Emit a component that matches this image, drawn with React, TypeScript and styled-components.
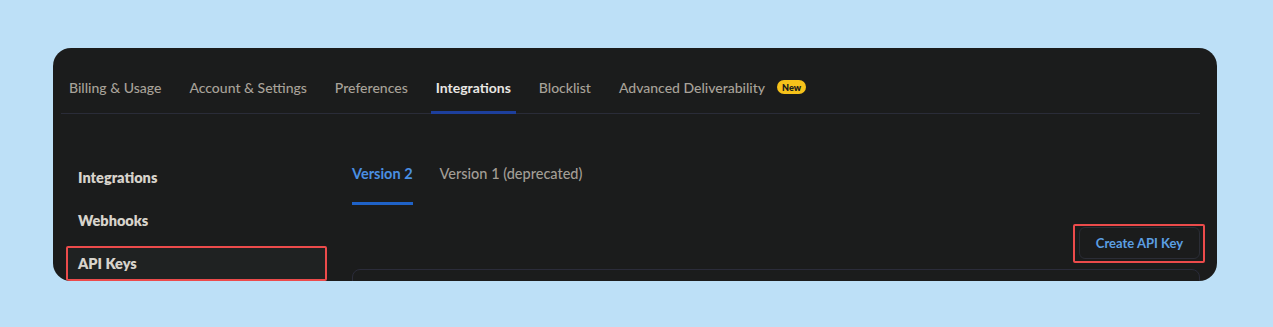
import React from 'react';
import styled, { createGlobalStyle } from 'styled-components';

const GlobalStyle = createGlobalStyle`
  html, body {
    margin: 0;
    padding: 0;
    background: #bde0f7;
  }
  body {
    font-family: Lato, "Noto Sans", sans-serif;
    -webkit-font-smoothing: antialiased;
  }
`;

const Page = styled.div`
  width: 1273px;
  height: 327px;
  padding: 48px 0 0 53px;
  box-sizing: border-box;
`;

const Card = styled.div`
  width: 1164px;
  height: 233px;
  background: #1b1c1c;
  border-radius: 18px;
  overflow: hidden;
  padding: 0 17px 0 8px;
  box-sizing: border-box;
  display: flex;
  flex-direction: column;
`;

const TopTabs = styled.nav`
  display: flex;
  align-items: stretch;
  gap: 18px;
  height: 65px;
  padding-left: 3px;
  border-bottom: 1px solid #2a2c38;
  flex-shrink: 0;
`;

const TopTab = styled.div<{ $active?: boolean }>`
  display: flex;
  align-items: center;
  gap: 12px;
  padding: 15px 5px 0 5px;
  font-size: 14px;
  font-weight: ${p => (p.$active ? 700 : 500)};
  color: ${p => (p.$active ? '#e9e7e3' : '#a8a299')};
  border-bottom: 3px solid ${p => (p.$active ? '#1d3f9c' : 'transparent')};
  margin-bottom: -1px;
  white-space: nowrap;
`;

const Badge = styled.span`
  display: inline-flex;
  align-items: center;
  height: 14px;
  padding: 0 5px;
  background: #f6c21a;
  color: #1b1c1c;
  font-size: 9px;
  font-weight: 800;
  border-radius: 7px;
`;

const Body = styled.div`
  display: grid;
  grid-template-columns: 261px 1fr;
  column-gap: 25px;
  padding-left: 5px;
`;

const Sidebar = styled.div`
  display: flex;
  flex-direction: column;
  gap: 8px;
  padding-top: 46px;
`;

const SideItem = styled.div<{ $active?: boolean }>`
  height: 35px;
  box-sizing: border-box;
  display: flex;
  align-items: center;
  padding-left: ${p => (p.$active ? '10px' : '12px')};
  font-size: 14.5px;
  font-weight: 800;
  color: #d7d3cb;
  background: ${p => (p.$active ? '#1f2222' : 'transparent')};
  border: ${p => (p.$active ? '2px solid #ec4b4b' : 'none')};
  border-radius: 2px;
`;

const Main = styled.div`
  display: flex;
  flex-direction: column;
  padding-top: 44px;
`;

const VersionTabs = styled.div`
  display: flex;
  gap: 27px;
`;

const VersionTab = styled.div<{ $active?: boolean }>`
  height: 47px;
  box-sizing: border-box;
  line-height: 32px;
  padding-bottom: 12px;
  font-size: 14.5px;
  font-weight: ${p => (p.$active ? 700 : 500)};
  color: ${p => (p.$active ? '#4a8fe2' : '#a39e96')};
  border-bottom: 3px solid ${p => (p.$active ? '#1f62c7' : 'transparent')};
`;

const ActionRow = styled.div`
  display: flex;
  justify-content: flex-end;
  margin-top: 19px;
  margin-right: -5px;
`;

const Highlight = styled.div`
  display: inline-flex;
  padding: 1px 3px 2px 4px;
  border: 2px solid #ec4b4b;
  border-radius: 2px;
`;

const Button = styled.button`
  width: 121px;
  height: 32px;
  background: transparent;
  border: 1px solid #2b2d36;
  border-radius: 6px;
  color: #5b9fe3;
  font-family: inherit;
  font-size: 13px;
  font-weight: 700;
  cursor: pointer;
`;

const Panel = styled.div`
  margin-top: 6px;
  height: 120px;
  border: 1px solid #2b2c3a;
  border-radius: 8px;
`;

export default function App() {
  const tabs = ['Billing & Usage', 'Account & Settings', 'Preferences', 'Integrations', 'Blocklist'];
  return (
    <Page>
      <GlobalStyle />
      <Card>
        <TopTabs>
          {tabs.map(t => (
            <TopTab key={t} $active={t === 'Integrations'}>{t}</TopTab>
          ))}
          <TopTab>
            Advanced Deliverability<Badge>New</Badge>
          </TopTab>
        </TopTabs>
        <Body>
          <Sidebar>
            <SideItem>Integrations</SideItem>
            <SideItem>Webhooks</SideItem>
            <SideItem $active>API Keys</SideItem>
          </Sidebar>
          <Main>
            <VersionTabs>
              <VersionTab $active>Version 2</VersionTab>
              <VersionTab>Version 1 (deprecated)</VersionTab>
            </VersionTabs>
            <ActionRow>
              <Highlight>
                <Button>Create API Key</Button>
              </Highlight>
            </ActionRow>
            <Panel />
          </Main>
        </Body>
      </Card>
    </Page>
  );
}
